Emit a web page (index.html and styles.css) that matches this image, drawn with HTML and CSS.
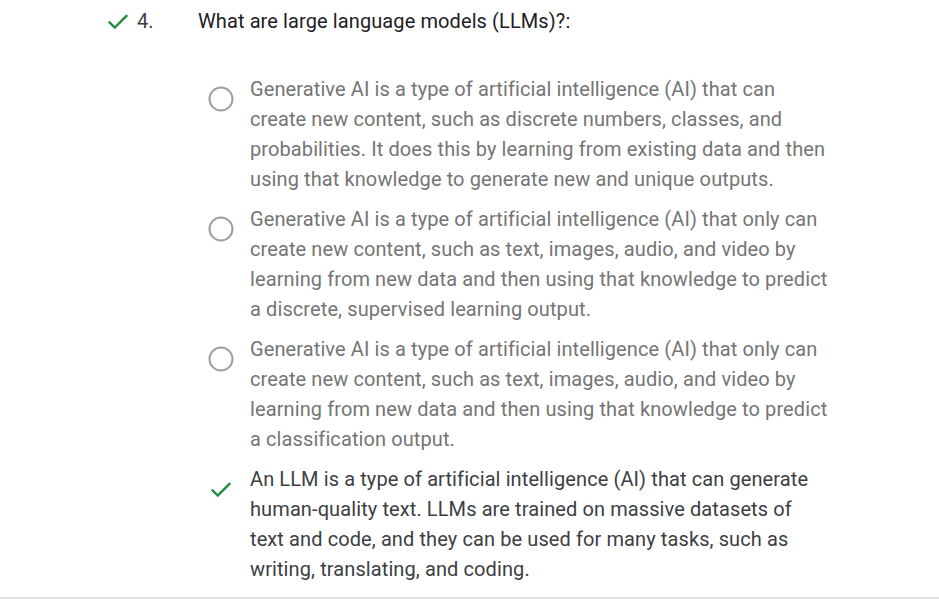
FILE: index.html
```html
<!DOCTYPE html>
<html>
<head>
<meta charset="utf-8">
<link rel="stylesheet" href="styles.css">
</head>
<body>
<div class="question">
  <div class="qhead">
    <svg class="qcheck" width="26" height="26" viewBox="0 0 24 24"><path d="M3.5 12.5l5.5 5.5 11.5-11.5" fill="none" stroke="#1e8e3e" stroke-width="2.2"/></svg>
    <span class="qnum">4.</span>
    <span class="qtext">What are large language models (LLMs)?:</span>
  </div>
  <div class="options">
    <div class="option">
      <div class="mark"><svg width="26" height="26" viewBox="0 0 26 26"><circle cx="13" cy="13" r="11.5" fill="none" stroke="#9e9e9e" stroke-width="2"/></svg></div>
      <div class="otext">Generative AI is a type of artificial intelligence (AI) that can create new content, such as discrete numbers, classes, and probabilities. It does this by learning from existing data and then using that knowledge to generate new and unique outputs.</div>
    </div>
    <div class="option">
      <div class="mark"><svg width="26" height="26" viewBox="0 0 26 26"><circle cx="13" cy="13" r="11.5" fill="none" stroke="#9e9e9e" stroke-width="2"/></svg></div>
      <div class="otext">Generative AI is a type of artificial intelligence (AI) that only can create new content, such as text, images, audio, and video by learning from new data and then using that knowledge to predict a discrete, supervised learning output.</div>
    </div>
    <div class="option">
      <div class="mark"><svg width="26" height="26" viewBox="0 0 26 26"><circle cx="13" cy="13" r="11.5" fill="none" stroke="#9e9e9e" stroke-width="2"/></svg></div>
      <div class="otext">Generative AI is a type of artificial intelligence (AI) that only can create new content, such as text, images, audio, and video by learning from new data and then using that knowledge to predict a classification output.</div>
    </div>
    <div class="option correct">
      <div class="mark"><svg width="26" height="26" viewBox="0 0 24 24"><path d="M3.5 12.5l5.5 5.5 11.5-11.5" fill="none" stroke="#1e8e3e" stroke-width="2.2"/></svg></div>
      <div class="otext">An LLM is a type of artificial intelligence (AI) that can generate human-quality text. LLMs are trained on massive datasets of text and code, and they can be used for many tasks, such as writing, translating, and coding.</div>
    </div>
  </div>
</div>
</body>
</html>
```
FILE: styles.css
```css
html, body {
  margin: 0;
  padding: 0;
  background: #ffffff;
}
body {
  font-family: Roboto, "Liberation Sans", sans-serif;
  font-size: 20px;
  letter-spacing: 0.1px;
  line-height: 30px;
  color: #202124;
}
.question {
  height: 597px;
  border-bottom: 2px solid #dfe5ec;
  box-sizing: content-box;
}
.qhead {
  display: flex;
  align-items: flex-start;
  padding: 6px 0 0 105px;
}
.qcheck {
  margin-top: 2px;
}
.qnum {
  margin-left: 6px;
  width: 61px;
  color: #3c4043;
}
.qtext {
  color: #202124;
}
.options {
  display: flex;
  flex-direction: column;
  gap: 10px;
  margin-top: 38px;
  padding-left: 208px;
}
.option {
  display: flex;
  align-items: flex-start;
}
.mark {
  width: 42px;
  flex: none;
}
.mark svg {
  display: block;
  margin-top: 12px;
}
.otext {
  width: 580px;
  color: #757575;
}
.correct .otext {
  color: #3c4043;
}
```
